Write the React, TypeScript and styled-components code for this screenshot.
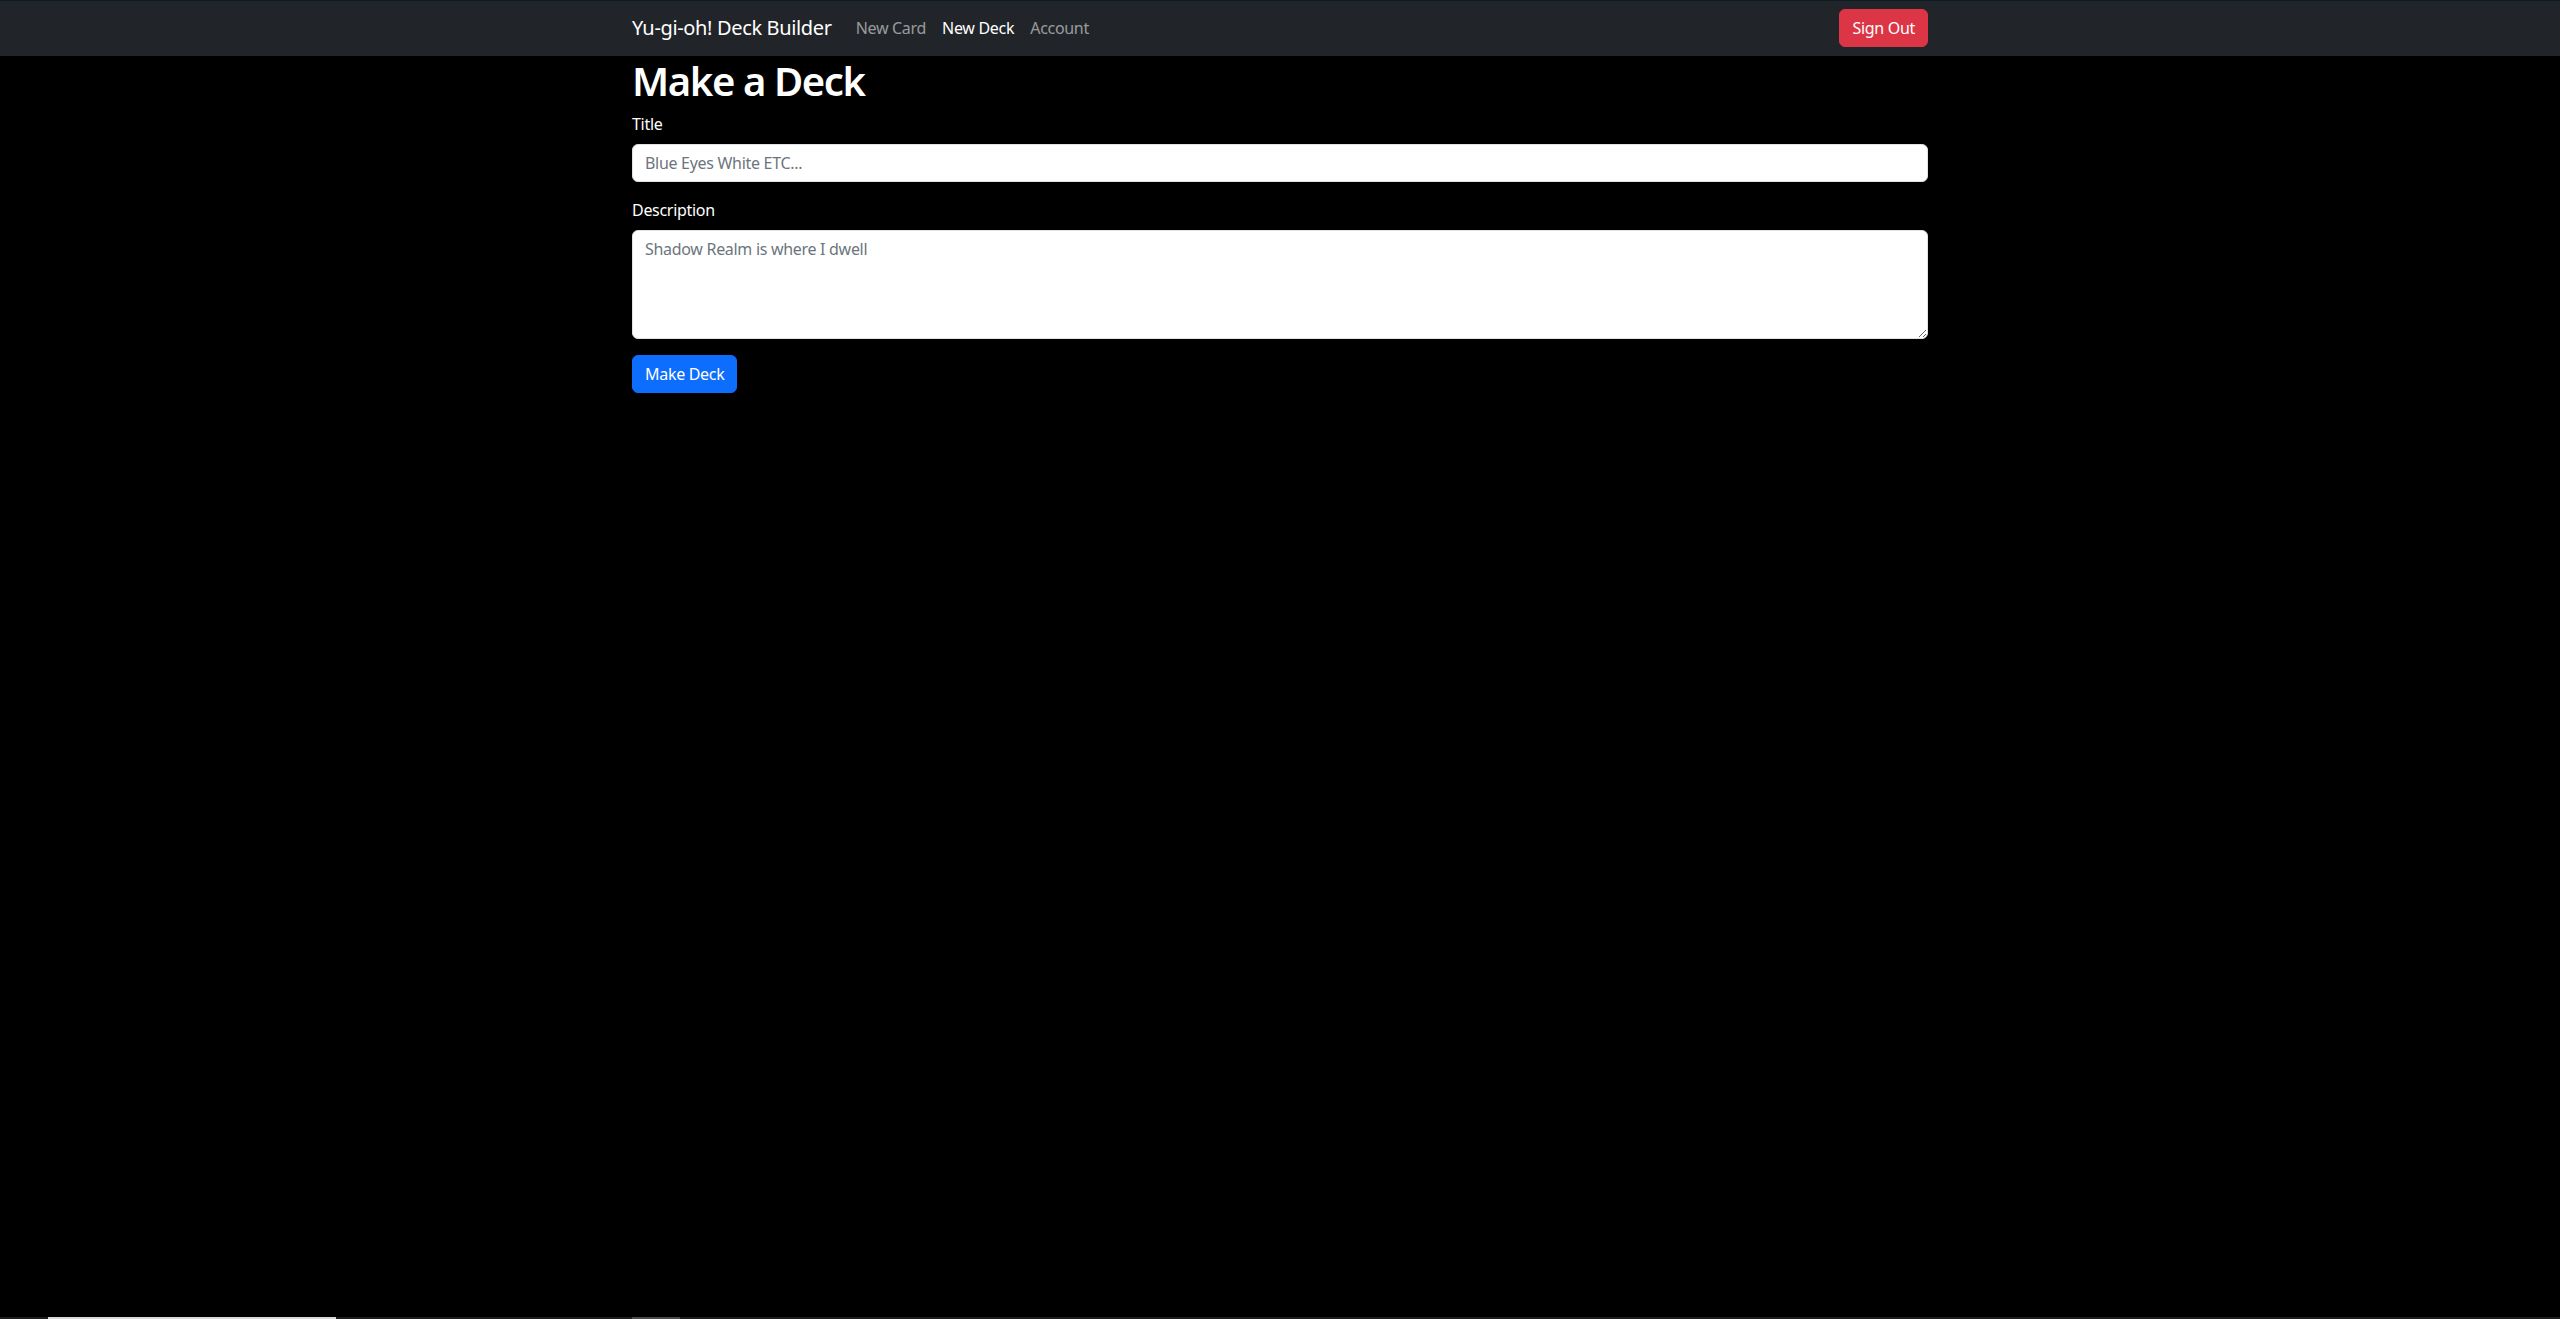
import styled, { createGlobalStyle } from 'styled-components'

const GlobalStyle = createGlobalStyle`
  *, *::before, *::after {
    box-sizing: border-box;
  }

  body {
    margin: 0;
    background: #000;
    color: #fff;
    font-family: 'Noto Sans', 'Open Sans', sans-serif;
    font-size: 16px;
    line-height: 1.5;
    letter-spacing: -0.3px;
  }
`

const Page = styled.div`
  display: flex;
  flex-direction: column;
  min-height: 100vh;
`

const Navbar = styled.nav`
  background: #212529;
  border-top: 1px solid #0d1c24;
  padding: 7px 0 8px;
`

const Container = styled.div`
  width: 100%;
  max-width: 1320px;
  margin: 0 auto;
  padding: 0 12px;
`

const NavInner = styled(Container)`
  display: flex;
  align-items: center;
  justify-content: space-between;
`

const NavLeft = styled.div`
  display: flex;
  align-items: center;
`

const Brand = styled.a`
  font-size: 20px;
  line-height: 30px;
  letter-spacing: -0.35px;
  padding: 5px 0;
  margin-right: 16px;
  color: #fff;
  text-decoration: none;
`

const NavList = styled.div`
  display: flex;
`

const NavLink = styled.a<{ $active?: boolean }>`
  padding: 8px;
  color: ${({ $active }) => ($active ? '#fff' : 'rgba(255, 255, 255, 0.55)')};
  text-decoration: none;
`

const Button = styled.button<{ $variant: 'danger' | 'primary' }>`
  font-family: inherit;
  font-size: 16px;
  line-height: 24px;
  letter-spacing: -0.3px;
  padding: 6px 12px;
  border-radius: 6px;
  color: #fff;
  cursor: pointer;
  background: ${({ $variant }) => ($variant === 'danger' ? '#dc3545' : '#0d6efd')};
  border: 1px solid ${({ $variant }) => ($variant === 'danger' ? '#dc3545' : '#0d6efd')};
`

const Main = styled(Container)`
  flex: 1;
`

const Heading = styled.h1`
  font-size: 40px;
  font-weight: 600;
  line-height: 1.2;
  letter-spacing: -1.4px;
  padding-top: 1px;
  margin: 0 0 7px;
`

const Field = styled.div`
  margin-bottom: 16px;
`

const Label = styled.label`
  display: block;
  margin-bottom: 8px;
  font-size: 16px;
  color: #fff;
`

const fieldBase = `
  display: block;
  width: 100%;
  padding: 6px 12px;
  font-family: inherit;
  font-size: 16px;
  line-height: 24px;
  letter-spacing: -0.3px;
  color: #212529;
  background: #fff;
  border: 1px solid #dee2e6;
  border-radius: 6px;

  &::placeholder {
    color: #6c757d;
  }
`

const Input = styled.input`
  ${fieldBase}
`

const Textarea = styled.textarea`
  ${fieldBase}
  height: 109px;
  resize: vertical;
`

const BottomStrip = styled.div`
  display: flex;
  height: 2px;
  background: #1c1c1c;
`

const StripPiece = styled.div<{ $left: number; $width: number; $color: string }>`
  margin-left: ${({ $left }) => $left}px;
  width: ${({ $width }) => $width}px;
  background: ${({ $color }) => $color};
`

export default function App() {
  return (
    <Page>
      <GlobalStyle />
      <Navbar>
        <NavInner>
          <NavLeft>
            <Brand href="#">Yu-gi-oh! Deck Builder</Brand>
            <NavList>
              <NavLink href="#">New Card</NavLink>
              <NavLink href="#" $active>
                New Deck
              </NavLink>
              <NavLink href="#">Account</NavLink>
            </NavList>
          </NavLeft>
          <Button $variant="danger">Sign Out</Button>
        </NavInner>
      </Navbar>
      <Main>
        <Heading>Make a Deck</Heading>
        <form onSubmit={(e) => e.preventDefault()}>
          <Field>
            <Label htmlFor="title">Title</Label>
            <Input id="title" type="text" placeholder="Blue Eyes White ETC..." />
          </Field>
          <Field>
            <Label htmlFor="description">Description</Label>
            <Textarea id="description" placeholder="Shadow Realm is where I dwell" />
          </Field>
          <Button $variant="primary" type="submit">
            Make Deck
          </Button>
        </form>
      </Main>
      <BottomStrip>
        <StripPiece $left={48} $width={288} $color="#d9d9d9" />
        <StripPiece $left={296} $width={48} $color="#4a4a4a" />
      </BottomStrip>
    </Page>
  )
}
